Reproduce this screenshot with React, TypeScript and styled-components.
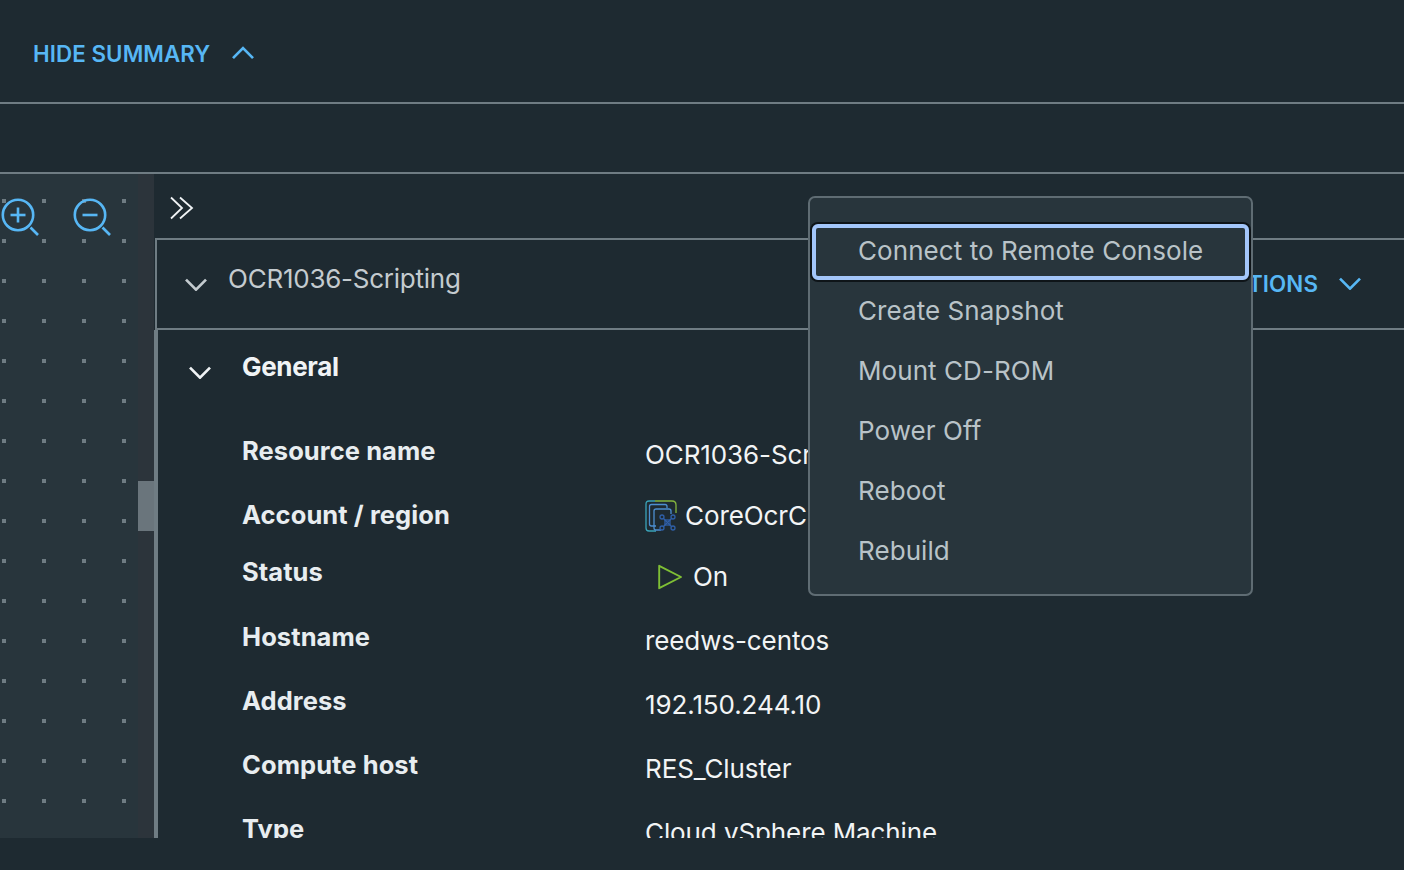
import React from "react";
import styled, { createGlobalStyle } from "styled-components";

const Global = createGlobalStyle`
  html, body { margin: 0; padding: 0; background: #1e2a31; }
  body { font-family: Inter, "Noto Sans", "Liberation Sans", sans-serif; }
  * { box-sizing: border-box; }
`;

const LINE = "#6f7c83";
const BLUE = "#57b7f5";

const Page = styled.div`
  position: relative;
  width: 1404px;
  height: 870px;
  overflow: hidden;
  background: #1e2a31;
`;

const SummaryBar = styled.header`
  height: 104px;
  border-bottom: 2px solid ${LINE};
  padding: 4px 0 0 33px;
  display: flex;
  align-items: center;
  gap: 22px;
`;

const LinkText = styled.span`
  color: ${BLUE};
  font-size: 22.3px;
  font-weight: 600;
  letter-spacing: 0.1px;
  white-space: nowrap;
`;

const TabBand = styled.div`
  height: 70px;
  border-bottom: 2px solid ${LINE};
`;

const Main = styled.main`
  height: 664px;
  display: flex;
  overflow: hidden;
`;

const Canvas = styled.section`
  position: relative;
  flex: 0 0 154px;
  display: flex;
  background: #28353c;
`;

const Dots = styled.div`
  position: absolute;
  inset: 0;
  background: ${LINE};
  -webkit-mask-image:
    linear-gradient(to right, #000 4px, transparent 4px),
    linear-gradient(to bottom, #000 4px, transparent 4px);
  -webkit-mask-size: 40px 40px;
  -webkit-mask-position: 2px 25px;
  -webkit-mask-composite: source-in;
  mask-image:
    linear-gradient(to right, #000 4px, transparent 4px),
    linear-gradient(to bottom, #000 4px, transparent 4px);
  mask-size: 40px 40px;
  mask-position: 2px 25px;
  mask-composite: intersect;
`;

const ZoomTools = styled.div`
  position: relative;
  flex: 1;
  display: flex;
  align-items: flex-start;
  gap: 32px;
  padding: 24px 0 0 0;
`;

const ScrollTrack = styled.div`
  position: relative;
  flex: 0 0 16px;
  background: #2c343b;
  padding-top: 307px;
`;

const ScrollThumb = styled.div`
  height: 50px;
  background: #6a757c;
`;

const Pane = styled.section`
  flex: 1;
  min-width: 0;
  display: flex;
  flex-direction: column;
`;

const PaneToolbar = styled.div`
  flex: 0 0 64px;
  padding: 22px 0 0 16px;
`;

const CardHeader = styled.div`
  flex: 0 0 92px;
  margin-left: 1px;
  border-left: 2px solid ${LINE};
  border-top: 2px solid ${LINE};
  border-bottom: 2px solid ${LINE};
  display: flex;
  align-items: flex-start;
  padding: 0 43px 0 28px;
`;

const CardTitle = styled.h2`
  margin: 23px 0 0 21px;
  height: 32px;
  line-height: 32px;
  font-size: 26px;
  font-weight: 400;
  color: #c4cbcf;
  white-space: nowrap;
  letter-spacing: -0.24px;
`;

const ActionsButton = styled.div`
  margin-left: auto;
  margin-top: 30px;
  display: flex;
  align-items: center;
  gap: 21px;
`;

const Details = styled.div`
  flex: 1;
  min-height: 0;
  overflow: hidden;
  border-left: 4px solid ${LINE};
  padding-top: 21px;
`;

const SectionHead = styled.div`
  display: flex;
  align-items: flex-start;
  height: 84px;
  padding-left: 31px;
`;

const SectionTitle = styled.h3`
  margin: 0 0 0 31px;
  font-size: 26px;
  line-height: 32px;
  font-weight: 700;
  color: #f0f3f5;
  letter-spacing: -0.35px;
`;

const Row = styled.div<{ $h: number }>`
  display: grid;
  grid-template-columns: 403px 1fr;
  height: ${(p) => p.$h}px;
  padding-left: 84px;
`;

const Label = styled.div`
  font-size: 25.5px;
  line-height: 32px;
  font-weight: 700;
  color: #e8edf0;
  white-space: nowrap;
  letter-spacing: 0.08px;
`;

const Value = styled.div<{ $top: number; $indent?: number }>`
  display: flex;
  align-items: center;
  gap: 8px;
  height: 32px;
  margin-top: ${(p) => p.$top}px;
  margin-left: ${(p) => p.$indent ?? 0}px;
  font-size: 26px;
  font-weight: 400;
  line-height: 32px;
  color: #f2f4f5;
  white-space: nowrap;
  letter-spacing: -0.1px;
`;

const StatusText = styled.span<{ $nudge: boolean }>`
  margin-left: ${(p) => (p.$nudge ? 2 : 0)}px;
`;

const ChevronSlot = styled.div<{ $top: number }>`
  margin-top: ${(p) => p.$top}px;
`;

const Menu = styled.div`
  position: absolute;
  left: 808px;
  top: 196px;
  width: 445px;
  height: 400px;
  padding: 23px 0 0;
  background: #28353c;
  border: 2px solid #5f6c73;
  border-radius: 7px;
`;

const MenuItem = styled.div<{ $focused?: boolean }>`
  height: 60px;
  margin: 0 2px;
  padding: 0 0 2px 46px;
  display: flex;
  align-items: center;
  font-size: 26px;
  letter-spacing: 0.07px;
  color: #b9c3c8;
  white-space: nowrap;
  position: relative;
  &::after {
    content: "";
    display: ${(p) => (p.$focused ? "block" : "none")};
    position: absolute;
    inset: 3px 0 1px;
    border-radius: 6px;
    border: 4px solid #a3c6fa;
    box-shadow: 0 0 0 2px #0e1418;
  }
`;

const Chevron = ({ color, w, up }: { color: string; w: number; up?: boolean }) => (
  <svg width={w} height={w * 0.6} viewBox="0 0 22 13" fill="none" style={{ display: "block", flex: "none" }}>
    <path
      d={up ? "M1 12 L11 2 L21 12" : "M1 1.5 L11 11.5 L21 1.5"}
      stroke={color}
      strokeWidth="2.7"
    />
  </svg>
);

const Magnifier = ({ plus }: { plus?: boolean }) => (
  <svg width="40" height="42" viewBox="0 0 40 42" fill="none" style={{ display: "block", flex: "none" }}>
    <circle cx="18" cy="17" r="15.2" stroke={BLUE} strokeWidth="2.6" />
    <path d="M30.5 29.5 L38 37" stroke={BLUE} strokeWidth="2.6" />
    <path d="M10.5 17 H25.5" stroke={BLUE} strokeWidth="2.6" />
    {plus && <path d="M18 9.5 V24.5" stroke={BLUE} strokeWidth="2.6" />}
  </svg>
);

const DoubleChevron = () => (
  <svg width="24" height="24" viewBox="0 0 24 24" fill="none" style={{ display: "block" }}>
    <path d="M1 1.5 L12 12 L1 22.5" stroke="#f0f3f5" strokeWidth="1.8" />
    <path d="M10 1.5 L22 12 L10 22.5" stroke="#f0f3f5" strokeWidth="1.8" />
  </svg>
);

const CloudIcon = () => (
  <svg width="32" height="32" viewBox="0 0 32 32" fill="none" style={{ display: "block", flex: "none" }}>
    <path d="M10 1 H4 Q1 1 1 4 V28 Q1 31 4 31 H11" stroke="#3aa3b8" strokeWidth="1.3" />
    <path d="M10 1 H27 Q31 1 31 5 V13" stroke="#84b53e" strokeWidth="1.3" />
    <path d="M11 26 H6.5 Q4.5 26 4.5 24 V6.5 Q4.5 4.5 6.5 4.5 H20 Q22 4.5 22 6.5 V8" stroke="#4d8fd0" strokeWidth="1.3" />
    <path d="M16 30 H11 Q9 30 9 28 V11 Q9 9 11 9 H24 Q26 9 26 11 V14" stroke="#4d8fd0" strokeWidth="1.3" />
    <g stroke="#2f5fa8" strokeWidth="1.3">
      <path d="M18 18 L27 27 M27 18 L18 27" />
      <rect x="20" y="20" width="5" height="5" />
      <circle cx="17" cy="17" r="2" />
      <circle cx="28" cy="17" r="2" />
      <circle cx="17" cy="28" r="2" />
      <circle cx="28" cy="28" r="2" />
    </g>
  </svg>
);

const PlayIcon = () => (
  <svg width="25" height="26" viewBox="0 0 25 26" fill="none" style={{ display: "block", flex: "none" }}>
    <path d="M1.2 1.8 L23 13 L1.2 24.2 Z" stroke="#7fbf35" strokeWidth="1.9" strokeLinejoin="round" />
  </svg>
);

const rows = [
  { label: "Resource name", h: 64, top: 4, value: "OCR1036-Scripting" },
  { label: "Account / region", h: 57, top: 1, value: "CoreOcrCloud", icon: <CloudIcon /> },
  { label: "Status", h: 65, top: 5, value: "On", icon: <PlayIcon />, indent: 13 },
  { label: "Hostname", h: 64, top: 4, value: "reedws-centos" },
  { label: "Address", h: 64, top: 4, value: "192.150.244.10" },
  { label: "Compute host", h: 64, top: 4, value: "RES_Cluster" },
  { label: "Type", h: 64, top: 4, value: "Cloud vSphere Machine" },
];

const menu = ["Connect to Remote Console", "Create Snapshot", "Mount CD-ROM", "Power Off", "Reboot", "Rebuild"];

export default function App() {
  return (
    <Page>
      <Global />
      <SummaryBar>
        <LinkText>HIDE SUMMARY</LinkText>
        <Chevron color={BLUE} w={22} up />
      </SummaryBar>
      <TabBand />
      <Main>
        <Canvas>
          <Dots />
          <ZoomTools>
            <Magnifier plus />
            <Magnifier />
          </ZoomTools>
          <ScrollTrack>
            <ScrollThumb />
          </ScrollTrack>
        </Canvas>
        <Pane>
          <PaneToolbar>
            <DoubleChevron />
          </PaneToolbar>
          <CardHeader>
            <ChevronSlot $top={38}>
              <Chevron color="#c4cbcf" w={22} />
            </ChevronSlot>
            <CardTitle>OCR1036-Scripting</CardTitle>
            <ActionsButton>
              <LinkText>ACTIONS</LinkText>
              <Chevron color={BLUE} w={22} />
            </ActionsButton>
          </CardHeader>
          <Details>
            <SectionHead>
              <ChevronSlot $top={15}>
                <Chevron color="#f0f3f5" w={22} />
              </ChevronSlot>
              <SectionTitle>General</SectionTitle>
            </SectionHead>
            {rows.map((r) => (
              <Row key={r.label} $h={r.h}>
                <Label>{r.label}</Label>
                <Value $top={r.top} $indent={r.indent}>
                  {r.icon}
                  <StatusText $nudge={!!r.indent}>{r.value}</StatusText>
                </Value>
              </Row>
            ))}
          </Details>
        </Pane>
      </Main>
      <Menu>
        {menu.map((m, i) => (
          <MenuItem key={m} $focused={i === 0}>
            {m}
          </MenuItem>
        ))}
      </Menu>
    </Page>
  );
}
